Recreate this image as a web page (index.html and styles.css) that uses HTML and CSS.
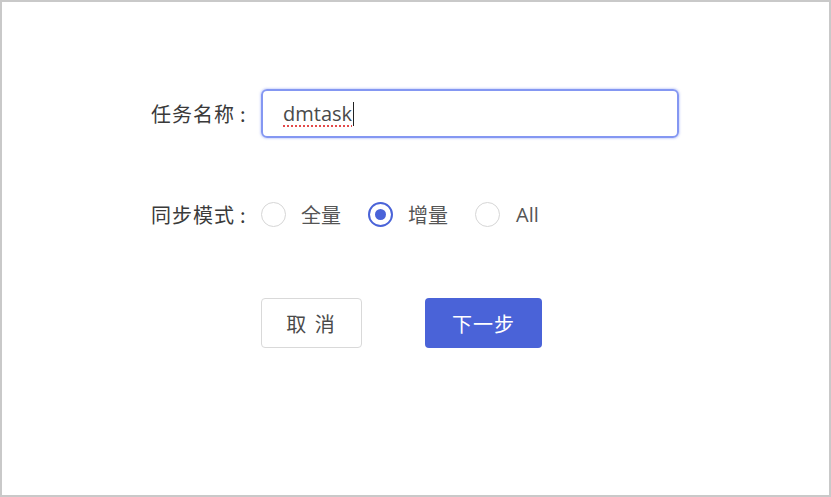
FILE: index.html
```html
<!DOCTYPE html>
<html lang="zh">
<head>
<meta charset="utf-8">
<title>任务</title>
<link rel="stylesheet" href="styles.css">
</head>
<body>
<div class="frame">
  <div class="row">
    <div class="label">任务名称<span class="colon">:</span></div>
    <div class="input"><span class="val">dmtask</span><span class="caret"></span></div>
  </div>
  <div class="row row-radio">
    <div class="label">同步模式<span class="colon">:</span></div>
    <div class="radios">
      <div class="radio"><span class="circle"></span><span class="rtext">全量</span></div>
      <div class="radio"><span class="circle checked"></span><span class="rtext">增量</span></div>
      <div class="radio"><span class="circle"></span><span class="rtext latin">All</span></div>
    </div>
  </div>
  <div class="actions">
    <div class="btn btn-default">取 消</div>
    <div class="btn btn-primary">下一步</div>
  </div>
</div>
</body>
</html>
```

FILE: styles.css
```css
html, body {
  margin: 0;
  padding: 0;
  background: #ffffff;
}
.frame {
  width: 831px;
  height: 497px;
  box-sizing: border-box;
  border: 2px solid #c9c9c9;
  padding: 87px 0 0 149px;
  font-family: "Noto Sans", "Noto Sans CJK SC", sans-serif;
  color: #444;
}
.row {
  display: flex;
  align-items: center;
}
.label {
  width: 100px;
  margin-right: 10px;
  font-size: 20px;
  letter-spacing: 1px;
  color: #3a3a3a;
  white-space: nowrap;
  font-family: "Noto Sans CJK SC", sans-serif;
}
.colon {
  margin-left: 5px;
}
.input {
  width: 418px;
  height: 49px;
  box-sizing: border-box;
  border: 2px solid #8497f2;
  border-radius: 6px;
  box-shadow: 0 0 2px 1px rgba(120, 140, 240, 0.35);
  display: flex;
  align-items: center;
  padding-left: 20px;
  font-size: 20px;
  color: #4a4a4a;
  font-family: "Open Sans", sans-serif;
}
.val {
  text-decoration: underline dotted #e34a4a;
  text-decoration-thickness: 2px;
  text-underline-offset: 4px;
}
.caret {
  display: inline-block;
  width: 1px;
  height: 24px;
  background: #222;
  margin-left: 1px;
}
.row-radio {
  margin-top: 62px;
}
.radios {
  display: flex;
  align-items: center;
  gap: 27px;
}
.radio {
  display: flex;
  align-items: center;
  gap: 15px;
}
.circle {
  width: 25px;
  height: 25px;
  box-sizing: border-box;
  border: 1px solid #d6d6d6;
  border-radius: 50%;
  display: flex;
  align-items: center;
  justify-content: center;
}
.circle.checked {
  border: 2px solid #4a63d8;
}
.circle.checked::after {
  content: "";
  width: 11px;
  height: 11px;
  border-radius: 50%;
  background: #4a63d8;
}
.rtext {
  font-size: 20px;
  color: #555;
  font-family: "Noto Sans CJK SC", sans-serif;
}
.rtext.latin {
  font-family: "Open Sans", sans-serif;
  margin-left: 1px;
}
.actions {
  display: flex;
  gap: 63px;
  margin-top: 69px;
  padding-left: 110px;
}
.btn {
  height: 50px;
  box-sizing: border-box;
  border-radius: 4px;
  display: flex;
  align-items: center;
  justify-content: center;
  font-size: 20px;
  font-family: "Noto Sans CJK SC", sans-serif;
}
.btn-default {
  width: 101px;
  border: 1px solid #d9d9d9;
  color: #4a4a4a;
  letter-spacing: 2px;
}
.btn-primary {
  width: 117px;
  background: #4a63d8;
  color: #ffffff;
  letter-spacing: 1px;
}
```
